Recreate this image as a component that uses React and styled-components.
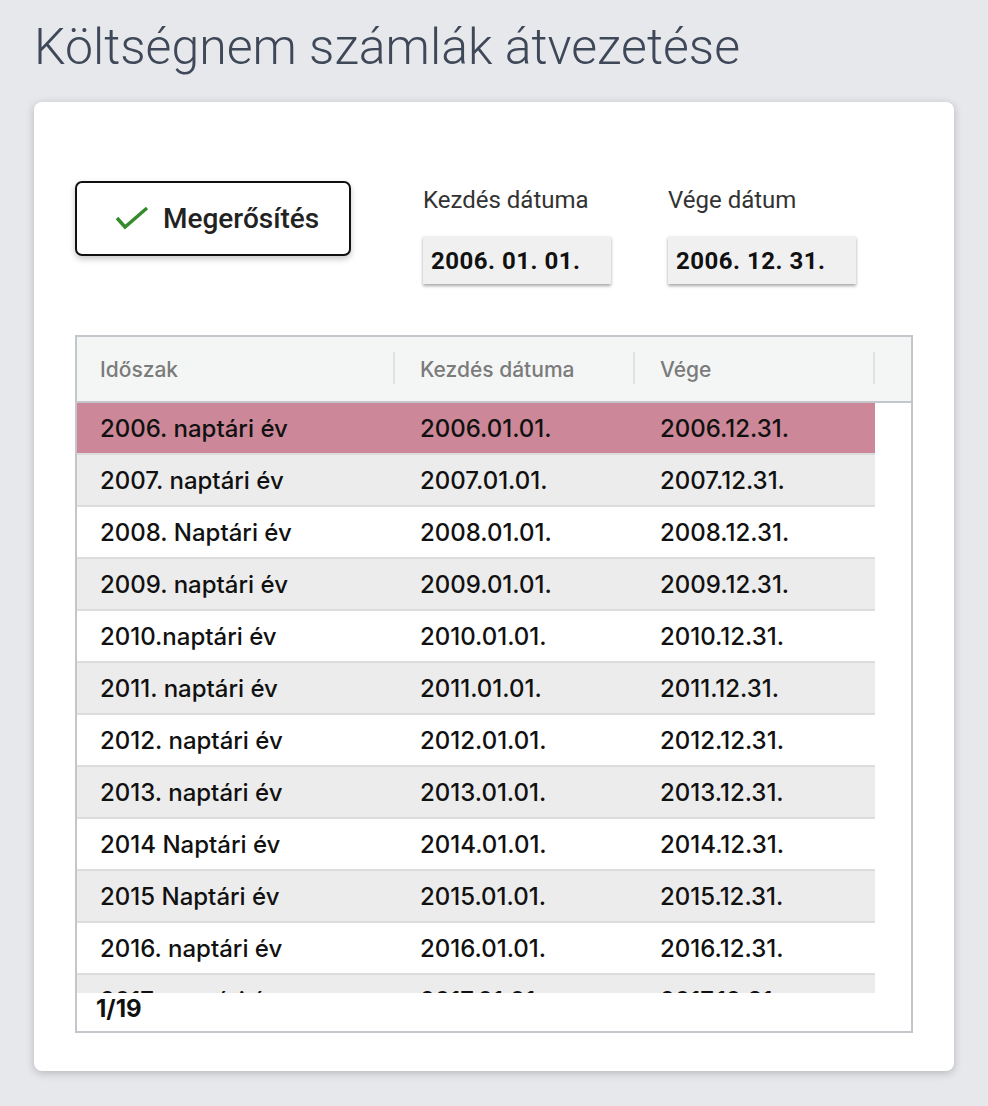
import React from 'react';
import styled, { createGlobalStyle } from 'styled-components';

const GlobalStyle = createGlobalStyle`
  html, body {
    margin: 0;
    padding: 0;
    background: #e7e8ec;
  }
  body {
    font-family: Roboto, "Noto Sans", sans-serif;
  }
`;

const Page = styled.div`
  padding: 20px 34px 36px;
`;

const Title = styled.h1`
  margin: 0 0 27px 0;
  font-family: Roboto, sans-serif;
  font-weight: 300;
  font-size: 50px;
  line-height: 55px;
  color: #3f4858;
`;

const Card = styled.div`
  width: 920px;
  box-sizing: border-box;
  background: #fff;
  border-radius: 8px;
  box-shadow: 0 2px 8px rgba(0, 0, 0, 0.22);
  padding: 79px 41px 38px;
`;

const Controls = styled.div`
  display: flex;
  align-items: flex-start;
  margin-bottom: 51px;
`;

const ConfirmButton = styled.button`
  width: 277px;
  height: 75px;
  box-sizing: border-box;
  display: flex;
  align-items: center;
  gap: 14px;
  padding: 0 0 0 38px;
  background: #fff;
  border: 2px solid #111;
  border-radius: 7px;
  box-shadow: 0 3px 6px rgba(0, 0, 0, 0.22);
  font-family: Roboto, sans-serif;
  font-weight: 500;
  font-size: 28px;
  color: #222;
  margin-right: 72px;
  cursor: pointer;
`;

const Field = styled.div`
  display: flex;
  flex-direction: column;
  margin-right: 57px;
  padding-top: 5px;
`;

const FieldLabel = styled.label`
  font-family: Roboto, sans-serif;
  font-size: 24px;
  color: #333;
  line-height: 28px;
  margin-bottom: 22px;
`;

const DateBox = styled.div`
  width: 188px;
  height: 48px;
  box-sizing: border-box;
  background: #f0f0f0;
  box-shadow: 0 2px 3px rgba(0, 0, 0, 0.35);
  display: flex;
  align-items: center;
  padding: 2px 0 0 8px;
  font-family: Roboto, sans-serif;
  font-weight: 700;
  font-size: 24px;
  letter-spacing: 0.5px;
  color: #111;
`;

const Table = styled.div`
  border: 2px solid #c3c6ca;
  font-family: Inter, "Noto Sans", sans-serif;
`;

const cols = '318px 240px 240px 1fr';

const HeadRow = styled.div`
  display: grid;
  grid-template-columns: ${cols};
  height: 64px;
  background: #f4f6f5;
  border-bottom: 2px solid #c3c6ca;
`;

const HeadCell = styled.div`
  position: relative;
  display: flex;
  align-items: center;
  padding-left: ${p => p.$pad}px;
  font-size: 21px;
  font-weight: 500;
  color: #7b7b7b;
  &:after {
    content: '';
    display: ${p => (p.$sep ? 'block' : 'none')};
    position: absolute;
    right: 0;
    top: 15px;
    bottom: 17px;
    width: 2px;
    background: #dfe0e4;
  }
`;

const Body = styled.div`
  height: 590px;
  overflow: hidden;
`;

const Row = styled.div`
  display: grid;
  grid-template-columns: 318px 240px 240px;
  width: 798px;
  height: 50px;
  border-bottom: 2px solid #dcdcdc;
  background: ${p => (p.$selected ? '#cc8898' : p.$odd ? '#ececec' : '#fff')};
`;

const Cell = styled.div`
  display: flex;
  align-items: center;
  padding-left: ${p => p.$pad}px;
  font-size: 24px;
  font-weight: 450;
  color: #111;
  white-space: nowrap;
`;

const Footer = styled.div`
  height: 38px;
  box-sizing: border-box;
  padding: 1px 0 0 19px;
  font-family: Inter, sans-serif;
  font-weight: 700;
  font-size: 24px;
  line-height: 30px;
  color: #111;
`;

const rows = [
  ['2006. naptári év', '2006.01.01.', '2006.12.31.'],
  ['2007. naptári év', '2007.01.01.', '2007.12.31.'],
  ['2008. Naptári év', '2008.01.01.', '2008.12.31.'],
  ['2009. naptári év', '2009.01.01.', '2009.12.31.'],
  ['2010.naptári év', '2010.01.01.', '2010.12.31.'],
  ['2011. naptári év', '2011.01.01.', '2011.12.31.'],
  ['2012. naptári év', '2012.01.01.', '2012.12.31.'],
  ['2013. naptári év', '2013.01.01.', '2013.12.31.'],
  ['2014 Naptári év', '2014.01.01.', '2014.12.31.'],
  ['2015 Naptári év', '2015.01.01.', '2015.12.31.'],
  ['2016. naptári év', '2016.01.01.', '2016.12.31.'],
  ['2017. naptári év', '2017.01.01.', '2017.12.31.'],
];

function CheckIcon() {
  return (
    <svg width="34" height="26" viewBox="0 0 34 26">
      <polyline
        points="2,12 10,21 32,2"
        fill="none"
        stroke="#358a2c"
        strokeWidth="3.4"
      />
    </svg>
  );
}

export default function App() {
  return (
    <Page>
      <GlobalStyle />
      <Title>Költségnem számlák átvezetése</Title>
      <Card>
        <Controls>
          <ConfirmButton>
            <CheckIcon />
            Megerősítés
          </ConfirmButton>
          <Field>
            <FieldLabel>Kezdés dátuma</FieldLabel>
            <DateBox>2006. 01. 01.</DateBox>
          </Field>
          <Field>
            <FieldLabel>Vége dátum</FieldLabel>
            <DateBox>2006. 12. 31.</DateBox>
          </Field>
        </Controls>
        <Table>
          <HeadRow>
            <HeadCell $pad={23} $sep>Időszak</HeadCell>
            <HeadCell $pad={25} $sep>Kezdés dátuma</HeadCell>
            <HeadCell $pad={25} $sep>Vége</HeadCell>
            <HeadCell />
          </HeadRow>
          <Body>
            {rows.map((r, idx) => (
              <Row key={idx} $selected={idx === 0} $odd={idx % 2 === 1}>
                <Cell $pad={23}>{r[0]}</Cell>
                <Cell $pad={25}>{r[1]}</Cell>
                <Cell $pad={25}>{r[2]}</Cell>
              </Row>
            ))}
          </Body>
          <Footer>1/19</Footer>
        </Table>
      </Card>
    </Page>
  );
}
